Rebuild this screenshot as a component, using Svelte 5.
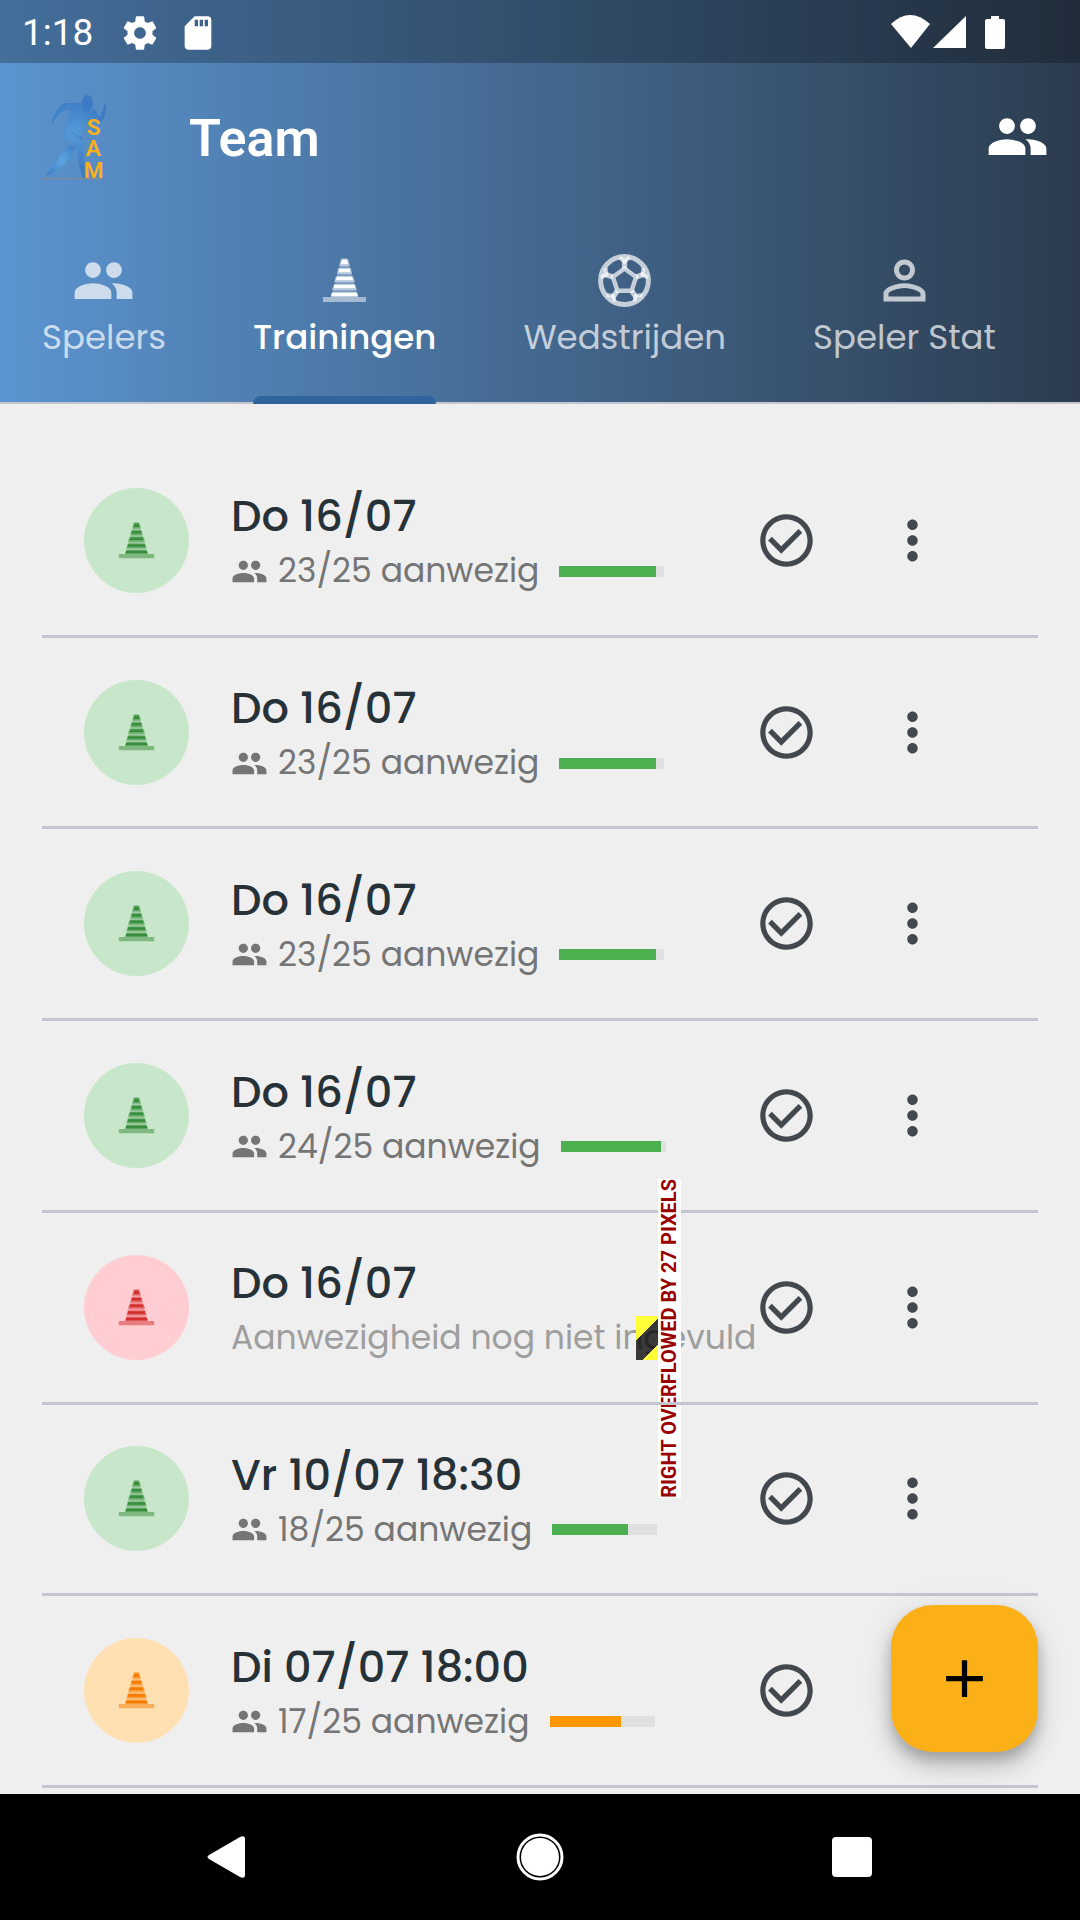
<script>
    let activeTab = $state('Trainingen');

    const tabs = [
        { name: 'Spelers', icon: 'people' },
        { name: 'Trainingen', icon: 'cone' },
        { name: 'Wedstrijden', icon: 'soccer' },
        { name: 'Speler Stat', icon: 'person' }
    ];

    const trainings = [
        { title: 'Do 16/07', present: 23, total: 25, status: 'good' },
        { title: 'Do 16/07', present: 23, total: 25, status: 'good' },
        { title: 'Do 16/07', present: 23, total: 25, status: 'good' },
        { title: 'Do 16/07', present: 24, total: 25, status: 'good' },
        { title: 'Do 16/07', present: null, total: 25, status: 'missing' },
        { title: 'Vr 10/07 18:30', present: 18, total: 25, status: 'good' },
        { title: 'Di 07/07 18:00', present: 17, total: 25, status: 'medium' }
    ];

    const paths = {
        people: 'M16 11c1.66 0 2.99-1.34 2.99-3S17.66 5 16 5s-3 1.34-3 3 1.34 3 3 3zm-8 0c1.66 0 2.99-1.34 2.99-3S9.66 5 8 5 5 6.34 5 8s1.34 3 3 3zm0 2c-2.33 0-7 1.17-7 3.5V19h14v-2.5c0-2.33-4.67-3.5-7-3.5zm8 0c-.29 0-.62.02-.97.05 1.16.84 1.97 1.97 1.97 3.45V19h6v-2.5c0-2.33-4.67-3.5-7-3.5z',
        person: 'M12 5.9a2.1 2.1 0 1 1 0 4.2 2.1 2.1 0 0 1 0-4.2m0 9c2.97 0 6.1 1.46 6.1 2.1v1.1H5.9V17c0-.64 3.13-2.1 6.1-2.1M12 4C9.79 4 8 5.79 8 8s1.79 4 4 4 4-1.79 4-4-1.79-4-4-4zm0 9c-2.67 0-8 1.34-8 4v3h16v-3c0-2.66-5.33-4-8-4z',
        check: 'M16.59 7.58L10 14.17l-3.59-3.58L5 12l5 5 8-8zM12 2C6.48 2 2 6.48 2 12s4.48 10 10 10 10-4.48 10-10S17.52 2 12 2zm0 18c-4.42 0-8-3.58-8-8s3.58-8 8-8 8 3.58 8 8-3.58 8-8 8z',
        more: 'M12 8c1.1 0 2-.9 2-2s-.9-2-2-2-2 .9-2 2 .9 2 2 2zm0 2c-1.1 0-2 .9-2 2s.9 2 2 2 2-.9 2-2-.9-2-2-2zm0 6c-1.1 0-2 .9-2 2s.9 2 2 2 2-.9 2-2-.9-2-2-2z',
        add: 'M19 13h-6v6h-2v-6H5v-2h6V5h2v6h6v2z',
        settings: 'M19.43 12.98c.04-.32.07-.64.07-.98s-.03-.66-.07-.98l2.11-1.65c.19-.15.24-.42.12-.64l-2-3.46c-.12-.22-.39-.3-.61-.22l-2.49 1c-.52-.4-1.08-.73-1.69-.98l-.38-2.65C14.46 2.18 14.25 2 14 2h-4c-.25 0-.46.18-.49.42l-.38 2.65c-.61.25-1.17.59-1.69.98l-2.49-1c-.23-.09-.49 0-.61.22l-2 3.46c-.13.22-.07.49.12.64l2.11 1.65c-.04.32-.07.65-.07.98s.03.66.07.98l-2.11 1.65c-.19.15-.24.42-.12.64l2 3.46c.12.22.39.3.61.22l2.49-1c.52.4 1.08.73 1.69.98l.38 2.65c.03.24.24.42.49.42h4c.25 0 .46-.18.49-.42l.38-2.65c.61-.25 1.17-.59 1.69-.98l2.49 1c.23.09.49 0 .61-.22l2-3.46c.12-.22.07-.49-.12-.64l-2.11-1.65zM12 15.5c-1.93 0-3.5-1.57-3.5-3.5s1.57-3.5 3.5-3.5 3.5 1.57 3.5 3.5-1.57 3.5-3.5 3.5z',
        sdcard: 'M18 2h-8L4 8v12c0 1.1.9 2 2 2h12c1.1 0 2-.9 2-2V4c0-1.1-.9-2-2-2zm-6 6h-2V4h2v4zm3 0h-2V4h2v4zm3 0h-2V4h2v4z'
    };
</script>

{#snippet icon(name)}
    <svg class="icon" viewBox="0 0 24 24" fill="currentColor" aria-hidden="true">
        <path d={paths[name]} />
    </svg>
{/snippet}

{#snippet cone()}
    <svg class="cone" viewBox="0 0 45 45" fill="currentColor" aria-hidden="true">
        <path opacity="0.3" d="M20 0h5l11 39H9z" />
        <g opacity="0.5">
            <path d="M19 1h7l2 7H17z" />
            <path d="M16 10h13l1 6H15z" />
            <path d="M14 18h17l2 6H12z" />
            <path d="M12 26h21l2 6H10z" />
            <path d="M10 34h25l1 5H9z" />
            <path d="M1 39h43v5H1z" />
        </g>
        <path d="M20 2h5l1 4h-7zM17 11h11v3H17zM15 19h15l1 3H14zM12 27h21v3H12zM10 35h25l1 3H9z" />
    </svg>
{/snippet}

{#snippet soccer()}
    <svg class="icon" viewBox="0 0 24 24" fill="none" stroke="currentColor" aria-hidden="true">
        <circle cx="12" cy="12" r="9.1" stroke-width="1.9" />
        <path stroke-width="1.7" d="M12 7.4l4.4 3.3-1.7 5.2H9.3l-1.7-5.2z" />
        <path stroke-width="2" d="M12 7.4V3.8M16.4 10.7l3.4-1.2M14.7 15.9l2 2.9M9.3 15.9l-2 2.9M7.6 10.7L4.2 9.5" />
        <path stroke-width="1.4" d="M10.2 3.2L12 4.9l1.8-1.7M19.2 7.2l-.4 2.5 2.1 1.2M18.8 17.6l-2.5.2-.6 2.2M5.2 17.6l2.5.2.6 2.2M4.8 7.2l.4 2.5-2.1 1.2" />
    </svg>
{/snippet}

<div class="screen">
    <header class="header">
        <div class="status-bar">
            <span class="clock">1:18</span>
            {@render icon('settings')}
            {@render icon('sdcard')}
            <svg class="signals" viewBox="0 0 116 36" fill="#fff" aria-hidden="true">
                <path d="M0 9Q19-9 39 9L20 33z" />
                <path d="M42 33L75 1v32z" />
                <path d="M100 1h8v3h4q2 0 2 2v26q0 2-2 2H96q-2 0-2-2V6q0-2 2-2h4z" />
            </svg>
        </div>

        <div class="app-bar">
            <svg class="logo" viewBox="120 275 201 264" role="img" aria-label="SAM">
                <defs>
                    <radialGradient id="body" gradientUnits="userSpaceOnUse" cx="222" cy="395" r="105">
                        <stop offset="0" stop-color="#559bd8" />
                        <stop offset="1" stop-color="#3c7bc3" />
                    </radialGradient>
                    <linearGradient id="leg" x1="1" y1="0" x2="0" y2="1">
                        <stop offset="0" stop-color="#3c7bc3" />
                        <stop offset="0.5" stop-color="#5ba5e0" />
                        <stop offset="1" stop-color="#3c7bc3" />
                    </linearGradient>
                </defs>
                <path fill="url(#body)" d="M192 305h52q6 24 24 26 14-9 17-5l13 20q10-14 17-41 6 8 2 28-6 25-16 35l-20-10q-14 0-22 12l-18 36q12 8 11 29-2 62 4 95h-8q-12-32-18-99-2-6-10-6-36-6-29-29 10-32 18-68-22-8-53 40-3-14 10-34 12-21 26-29z" />
                <path fill="url(#leg)" d="M201 431q15 5 27 2-12 42-66 80l-21 10q-3-2 8-17 38-45 52-75z" />
                <path fill="none" stroke="#3774bb" stroke-width="2" d="M213 390q18 18 34 25l-8-12" />
                <ellipse cx="262" cy="306" rx="17" ry="25" fill="#3c7bc3" />
                <path stroke="#8f8d86" stroke-width="3" d="M123 532h184" />
                <text fill="#fcb017" text-anchor="middle" font-size="68">
                    <tspan x="281" y="402">S</tspan><tspan x="280" y="465">A</tspan><tspan x="281" y="529">M</tspan>
                </text>
            </svg>
            <h1>Team</h1>
            <button class="icon-button" aria-label="Team wisselen">{@render icon('people')}</button>
        </div>

        <div class="tabs" role="tablist">
            {#each tabs as tab}
                <button
                    class="tab"
                    class:active={activeTab === tab.name}
                    role="tab"
                    aria-selected={activeTab === tab.name}
                    onclick={() => (activeTab = tab.name)}
                >
                    <span class="tab-icon">
                        {#if tab.icon === 'cone'}
                            {@render cone()}
                        {:else if tab.icon === 'soccer'}
                            {@render soccer()}
                        {:else}
                            {@render icon(tab.icon)}
                        {/if}
                    </span>
                    <span>{tab.name}</span>
                </button>
            {/each}
        </div>
    </header>

    <main class="content">
        <ul class="list">
            {#each trainings as training}
                <li class="row">
                    <div class="avatar {training.status}">{@render cone()}</div>
                    <div class="info">
                        <h2>{training.title}</h2>
                        {#if training.present === null}
                            <div class="attendance empty">
                                <span>Aanwezigheid nog niet ingevuld</span>
                                <div class="overflow">
                                    <span class="overflow-label">RIGHT OVERFLOWED BY 27 PIXELS</span>
                                </div>
                            </div>
                        {:else}
                            <div class="attendance">
                                {@render icon('people')}
                                <span>{training.present}/{training.total} aanwezig</span>
                                <div class="bar">
                                    <div
                                        class="bar-value {training.status}"
                                        style="width: {(training.present / training.total) * 100}%"
                                    ></div>
                                </div>
                            </div>
                        {/if}
                    </div>
                    <button class="icon-button" aria-label="Aanwezigheid">{@render icon('check')}</button>
                    <button class="icon-button" aria-label="Meer">{@render icon('more')}</button>
                </li>
            {/each}
        </ul>
        <button class="fab" aria-label="Training toevoegen">{@render icon('add')}</button>
    </main>

    <nav class="system-nav">
        <button aria-label="Terug">
            <svg viewBox="0 0 48 48" fill="#fff"><path d="M5 22L36 4q5-2 5 2v36q0 4-5 2L5 26q-3-2 0-4z" /></svg>
        </button>
        <button aria-label="Start">
            <svg viewBox="0 0 48 48" fill="#fff">
                <circle cx="24" cy="24" r="19" />
                <circle cx="24" cy="24" r="22" fill="none" stroke="#fff" stroke-width="3" />
            </svg>
        </button>
        <button aria-label="Recent">
            <svg viewBox="0 0 48 48" fill="#fff"><rect x="4" y="4" width="40" height="40" rx="4" /></svg>
        </button>
    </nav>
</div>

<style>
    :global(body) {
        background-color: #efefef;
    }

    .screen {
        min-height: 100vh;
        display: flex;
        flex-direction: column;
        background-color: #efefef;
        font-family: Poppins, Inter, sans-serif;
    }

    button {
        padding: 0;
        border: none;
        background: none;
        color: inherit;
        font: inherit;
        cursor: pointer;
    }

    svg {
        display: block;
        flex-shrink: 0;
    }

    .icon {
        width: 63px;
        height: 63px;
    }

    .header {
        background: linear-gradient(to right, #5b94d0, #2c3c4e);
        border-bottom: 2px solid #c3c6cf;
        color: white;
    }

    .status-bar {
        height: 63px;
        padding: 2px 73px 0 22px;
        box-sizing: border-box;
        display: flex;
        align-items: center;
        background-color: rgba(0, 0, 0, 0.25);
        font-family: Roboto, sans-serif;
        font-size: 37px;
    }

    .status-bar .icon {
        width: 40px;
        height: 40px;
        margin-right: 18px;
    }

    .clock {
        margin-right: 27px;
    }

    .signals {
        width: 116px;
        height: 36px;
        margin-left: auto;
    }

    .app-bar {
        height: 147px;
        padding: 0 31px 0 40px;
        display: flex;
        align-items: center;
    }

    .logo {
        width: 67px;
        height: 88px;
        overflow: visible;
        font-family: Roboto, sans-serif;
        font-weight: 600;
    }

    h1 {
        flex: 1;
        margin: 0 0 0 82px;
        padding-top: 4px;
        font-family: Roboto, sans-serif;
        font-size: 52px;
        font-weight: 600;
    }

    .tabs {
        padding: 0 84px 0 42px;
        display: flex;
        justify-content: space-between;
    }

    .tab {
        position: relative;
        height: 192px;
        padding-bottom: 2px;
        display: flex;
        flex-direction: column;
        align-items: center;
        justify-content: center;
        font-size: 34px;
        line-height: 50px;
        color: rgba(255, 255, 255, 0.7);
    }

    .tab-icon {
        height: 63px;
        display: flex;
        align-items: center;
    }

    .tab .cone {
        width: 45px;
        height: 45px;
    }

    .tab.active {
        color: white;
        font-weight: 500;
    }

    .tab.active::after {
        content: "";
        position: absolute;
        left: 0;
        right: 0;
        bottom: -2px;
        height: 8px;
        border-radius: 8px 8px 0 0;
        background-color: #2f649c;
    }

    .content {
        flex: 1;
        position: relative;
        display: flex;
        flex-direction: column;
    }

    .list {
        flex: 1;
        margin: 39px 42px 6px;
        padding: 0;
        border-bottom: 3px solid #c3c6d0;
        display: flex;
        flex-direction: column;
        list-style: none;
    }

    .row {
        flex: 1;
        position: relative;
        padding: 0 63px 0 42px;
        border-top: 3px solid #c3c6d0;
        display: flex;
        align-items: center;
    }

    .row:first-child {
        border-top-color: transparent;
    }

    .avatar {
        width: 105px;
        height: 105px;
        margin-right: 42px;
        border-radius: 50%;
        display: flex;
        align-items: center;
        justify-content: center;
    }

    .avatar .cone {
        width: 37px;
        height: 37px;
    }

    .avatar.good {
        background-color: #c8e6c9;
        color: #388e3c;
    }

    .avatar.missing {
        background-color: #ffcdd2;
        color: #d32f2f;
    }

    .avatar.medium {
        background-color: #ffe0b2;
        color: #f57c00;
    }

    .info {
        flex: 1;
        min-width: 0;
        margin-right: 42px;
    }

    h2 {
        margin: 0;
        color: #263238;
        font-size: 43px;
        font-weight: 500;
        line-height: 62px;
    }

    .attendance {
        position: relative;
        display: flex;
        align-items: center;
        color: #757575;
        font-size: 33px;
        line-height: 48px;
        white-space: nowrap;
    }

    .attendance .icon {
        width: 37px;
        height: 37px;
        margin-right: 10px;
    }

    .attendance.empty {
        color: #9e9e9e;
    }

    .bar {
        width: 105px;
        height: 11px;
        margin-left: 20px;
        background-color: #e0e0e0;
    }

    .bar-value {
        height: 100%;
    }

    .bar-value.good {
        background-color: #4caf50;
    }

    .bar-value.medium {
        background-color: #ff9800;
    }

    /* debug stripes where the text runs out of its column */
    .overflow {
        position: absolute;
        top: 2px;
        right: 0;
        width: 45px;
        height: 44px;
        display: flex;
        align-items: center;
        justify-content: flex-end;
        background: linear-gradient(135deg, #ffff39 17px, rgba(0, 0, 0, 0.76) 17px, rgba(0, 0, 0, 0.76) 36px, #ffff39 36px);
    }

    .overflow-label {
        writing-mode: vertical-rl;
        transform: rotate(180deg);
        background-color: white;
        color: #900;
        font-family: Roboto, sans-serif;
        font-size: 20px;
        font-weight: 700;
        line-height: 23px;
    }

    .icon-button {
        color: #43474e;
    }

    .row .icon-button {
        width: 126px;
        height: 126px;
        display: flex;
        align-items: center;
        justify-content: center;
    }

    .app-bar .icon-button {
        color: white;
    }

    .fab {
        position: absolute;
        right: 42px;
        bottom: 42px;
        width: 147px;
        height: 147px;
        border-radius: 42px;
        display: flex;
        align-items: center;
        justify-content: center;
        background-color: #fcb017;
        color: black;
        box-shadow: 0 8px 13px rgba(0, 0, 0, 0.2), 0 16px 26px rgba(0, 0, 0, 0.14), 0 3px 42px rgba(0, 0, 0, 0.06);
    }

    .system-nav {
        height: 126px;
        padding: 0 72px;
        display: flex;
        background-color: black;
    }

    .system-nav button {
        flex: 1;
        display: flex;
        align-items: center;
        justify-content: center;
    }

    .system-nav svg {
        width: 48px;
        height: 48px;
    }
</style>
